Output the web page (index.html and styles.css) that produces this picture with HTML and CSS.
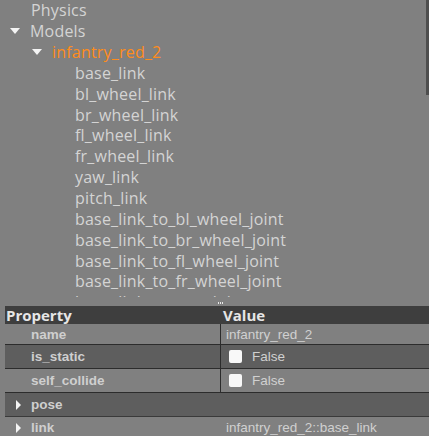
FILE: index.html
```html
<!DOCTYPE html>
<html>
<head>
<meta charset="utf-8">
<link rel="stylesheet" href="styles.css">
</head>
<body>
<div class="pane">
  <div class="tree">
    <div class="row d1"><span class="arrow none"></span><span class="label">Physics</span></div>
    <div class="row d1"><span class="arrow down"></span><span class="label">Models</span></div>
    <div class="row d2"><span class="arrow down"></span><span class="label orange">infantry_red_2</span></div>
    <div class="row d3"><span class="label">base_link</span></div>
    <div class="row d3"><span class="label">bl_wheel_link</span></div>
    <div class="row d3"><span class="label">br_wheel_link</span></div>
    <div class="row d3"><span class="label">fl_wheel_link</span></div>
    <div class="row d3"><span class="label">fr_wheel_link</span></div>
    <div class="row d3"><span class="label">yaw_link</span></div>
    <div class="row d3"><span class="label">pitch_link</span></div>
    <div class="row d3"><span class="label">base_link_to_bl_wheel_joint</span></div>
    <div class="row d3"><span class="label">base_link_to_br_wheel_joint</span></div>
    <div class="row d3"><span class="label">base_link_to_fl_wheel_joint</span></div>
    <div class="row d3"><span class="label">base_link_to_fr_wheel_joint</span></div>
    <div class="row d3"><span class="label">base_link_to_yaw_joint</span></div>
    <div class="scrollbar"></div>
  </div>
  <div class="splitter"><div class="grip"><i></i><i></i><i></i></div></div>
  <div class="props">
    <div class="head">
      <div class="c1">Property</div>
      <div class="c2">Value</div>
    </div>
    <div class="prow first">
      <div class="c1 key">name</div>
      <div class="c2 val">infantry_red_2</div>
    </div>
    <div class="prow alt">
      <div class="c1 key">is_static</div>
      <div class="c2 val"><span class="check"></span>False</div>
    </div>
    <div class="prow">
      <div class="c1 key">self_collide</div>
      <div class="c2 val"><span class="check"></span>False</div>
    </div>
    <div class="prow alt span">
      <div class="c1 key"><span class="tri"></span>pose</div>
      <div class="c2 val"></div>
    </div>
    <div class="prow span last">
      <div class="c1 key"><span class="tri"></span>link</div>
      <div class="c2 val">infantry_red_2::base_link</div>
    </div>
  </div>
</div>
</body>
</html>
```

FILE: styles.css
```css
html, body {
  margin: 0;
  padding: 0;
  background: #808080;
  width: 429px;
  height: 436px;
  overflow: hidden;
}
.pane {
  display: flex;
  flex-direction: column;
  height: 436px;
}
.tree {
  position: relative;
  flex: none;
  height: 297px;
  overflow: hidden;
  font-family: "Open Sans", "DejaVu Sans", sans-serif;
  font-size: 16px;
  letter-spacing: 0.2px;
  color: #d4d4d4;
}
.row {
  height: 20.85px;
  display: flex;
  align-items: center;
  white-space: nowrap;
}
.row.d1 { padding-left: 10px; }
.row.d2 { padding-left: 32px; }
.row.d3 { padding-left: 75px; }
.arrow {
  width: 11px;
  height: 6px;
  margin-right: 10px;
  flex: none;
}
.arrow.down {
  width: 0;
  height: 0;
  border-left: 5.5px solid transparent;
  border-right: 5.5px solid transparent;
  border-top: 6px solid #f4f4f4;
}
.label { line-height: 20px; }
.orange { color: #ff8c1a; }
.scrollbar {
  position: absolute;
  right: 0;
  top: 0;
  width: 3px;
  height: 95px;
  background: #4e4e4e;
}
.splitter {
  flex: none;
  height: 9px;
  display: flex;
  justify-content: center;
  align-items: flex-end;
}
.grip {
  display: flex;
  gap: 1px;
  margin-bottom: 2px;
  margin-left: 12px;
}
.grip i {
  display: block;
  width: 1px;
  height: 2px;
  background: #e8e8e8;
}
.props {
  flex: 1;
  margin-left: 5px;
  font-family: "Liberation Sans", Arial, sans-serif;
  font-size: 13.5px;
}
.head {
  display: flex;
  height: 18px;
  background: #3e3e3e;
  font-family: "Open Sans", "DejaVu Sans", sans-serif;
  font-weight: bold;
  font-size: 15px;
  color: #e6e6e6;
  align-items: center;
}
.head .c1 { width: 216px; padding-left: 1px; }
.head .c2 { padding-left: 1px; }
.prow {
  display: flex;
  height: 24px;
  box-sizing: border-box;
  border-bottom: 1px solid #2c2c2c;
}
.prow.first { height: 21px; }
.prow.alt {
  background: #5e5e5e;
}
.prow.span { border-bottom: 1px solid #3a3a3a; }
.prow .c1 {
  width: 216px;
  box-sizing: border-box;
  border-right: 1px solid #2c2c2c;
  padding-left: 26px;
  display: flex;
  align-items: center;
  font-weight: bold;
  color: #cfcfcf;
}
.prow.span .c1 { border-right-color: transparent; padding-left: 11px; }
.prow .c2 {
  flex: 1;
  display: flex;
  align-items: center;
  padding-left: 5px;
  color: #d0d0d0;
}
.check {
  width: 13px;
  height: 13px;
  background: #f8f8f8;
  border-radius: 2px;
  margin-left: 3px;
  margin-right: 10px;
}
.tri {
  width: 0;
  height: 0;
  border-top: 5px solid transparent;
  border-bottom: 5px solid transparent;
  border-left: 5px solid #f4f4f4;
  margin-right: 10px;
}
.prow.last { border-bottom: none; height: 21px; }
```
